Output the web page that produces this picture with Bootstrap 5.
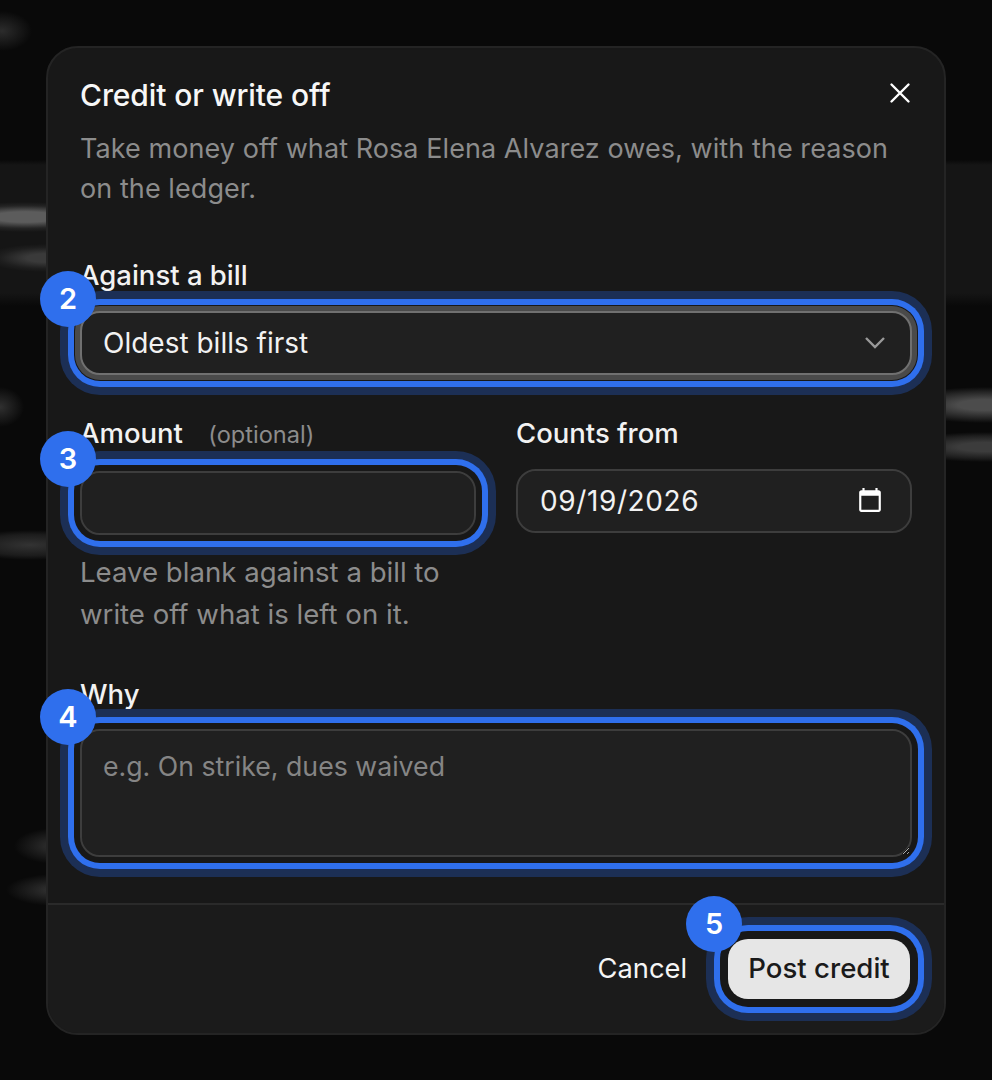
<!doctype html>
<html lang="en">
<head>
<meta charset="utf-8">
<title>Credit or write off</title>
<link href="https://cdn.jsdelivr.net/npm/bootstrap@5.3.0/dist/css/bootstrap.min.css" rel="stylesheet">
<style>
html,body{height:1080px;overflow:hidden}
body{color-scheme:dark;font-family:Inter,"Noto Sans",sans-serif;color:#f2f2f2;padding:46px 46px 45px;
background-color:#090909;background-repeat:no-repeat;
background-image:
 radial-gradient(ellipse 30px 20px at 2px 31px,#2c2c2c,transparent),
 radial-gradient(ellipse 90px 15px at 25px 217px,#5c5c5c 35%,#242424 75%,transparent),
 radial-gradient(ellipse 60px 14px at 45px 258px,#3a3a3a 30%,#1e1e1e 75%,transparent),
 radial-gradient(ellipse 24px 20px at 0 407px,#303030,transparent),
 radial-gradient(ellipse 70px 15px at 30px 545px,#333,#1c1c1c 70%,transparent),
 radial-gradient(ellipse 42px 18px at 56px 846px,#343434,transparent),
 radial-gradient(ellipse 50px 16px at 56px 890px,#363636,transparent),
 radial-gradient(ellipse 90px 18px at 985px 405px,#4c4c4c 30%,#222 75%,transparent),
 radial-gradient(ellipse 90px 15px at 985px 447px,#3c3c3c 30%,#1e1e1e 75%,transparent),
 linear-gradient(#090909,#151515 5px,#151515 133px,#090909);
background-size:auto,auto,auto,auto,auto,auto,auto,auto,auto,100% 146px;
background-position:0 0,0 0,0 0,0 0,0 0,0 0,0 0,0 0,0 0,0 160px}
.sheet{height:989px;width:900px;background:#181818;border:2px solid #242424;border-radius:32px;--bs-card-bg:#181818}
.sheet-main{padding:29px 32px 0}
.sheet-title{font-size:30px;line-height:36px;font-weight:500;letter-spacing:-.1px;color:#f7f7f7}
.closer{width:24px;height:24px;line-height:0;background:none;border:0;padding:0;color:#fff;margin-top:-4px}
.sheet-desc{font-size:27px;letter-spacing:.07px;line-height:40px;color:#8c8c8c;margin-top:16px;margin-bottom:46px}
.fld-label{font-size:27.5px;line-height:40px;font-weight:500;color:#f2f2f2;margin-bottom:16px;display:block}
.opt{font-size:23.6px;font-weight:400;color:#8c8c8c;margin-left:18px}
.spot{position:relative}
.fld{font-size:28px;line-height:40px;height:64px;padding:10px 21px;color:#f2f2f2;background-color:#202020;border:2px solid #3d3d3d;border-radius:20px}
.fld:focus{background-color:#202020;color:#f2f2f2;border-color:#3d3d3d}
.fld::placeholder{color:#858585}
input[type=date].fld{letter-spacing:.6px;padding-left:22px;padding-right:24px}
select.fld{background-size:22px 14px;background-position:right 24px center;background-image:url("data:image/svg+xml,%3csvg xmlns='http://www.w3.org/2000/svg' viewBox='0 0 22 14'%3e%3cpath fill='none' stroke='%23999' stroke-width='2.4' d='M2 2l9 9 9-9'/%3e%3c/svg%3e");border-color:#707070;box-shadow:0 0 0 5px #4a4a4a,0 0 0 6px #181818,0 0 0 12px #2f6fed,0 0 0 20px #1c2f55}
.ringed,.ringed:focus{box-shadow:0 0 0 6px #181818,0 0 0 12px #2f6fed,0 0 0 20px #1c2f55}
textarea.fld{height:128px;border-radius:20px;font-size:26.7px;padding-top:15px}
.pin{position:absolute;left:-40px;top:-40px;width:56px;height:56px;border-radius:50%;background:#2f6fed;color:#fff;font-size:29px;font-weight:600;z-index:2}
.pair{--bs-gutter-x:40px;margin-top:38px}
.hintline{font-size:27.6px;line-height:42px;color:#8c8c8c;margin-top:16px}
.why{margin-top:39px}
.why .fld-label{margin-bottom:15px}
.sheet-foot{margin-top:auto;height:130px;background:#1b1b1b;border-top:2px solid #2a2a2a;border-radius:0 0 30px 30px;padding-right:34px}
.cancel{font-size:27.3px;color:#f5f5f5;background:none;border:0;padding:0;margin-right:41px}
.post{position:relative;width:182px;height:60px;font-size:27.6px;font-weight:450;background:#e6e6e6;color:#1a1a1a;border:0;border-radius:20px;padding:0;box-shadow:0 0 0 8px #181818,0 0 0 14px #2f6fed,0 0 0 22px #1c2f55}
.post:hover,.post:active{background:#e6e6e6!important;color:#1a1a1a!important}
.post .pin{left:-42px;top:-43px}
</style>
</head>
<body>
<div class="card sheet d-flex flex-column">
  <div class="sheet-main">
    <div class="d-flex justify-content-between align-items-center">
      <div class="sheet-title">Credit or write off</div>
      <button class="closer" type="button" aria-label="Close"><svg width="24" height="24" viewBox="0 0 24 24"><path d="M3.5 3.5l17 17M20.5 3.5l-17 17" fill="none" stroke="currentColor" stroke-width="2.4" stroke-linecap="round"/></svg></button>
    </div>
    <p class="sheet-desc">Take money off what Rosa Elena Alvarez owes, with the reason on the ledger.</p>

    <label class="fld-label">Against a bill</label>
    <div class="spot">
      <span class="pin d-flex align-items-center justify-content-center">2</span>
      <select class="form-select fld"><option>Oldest bills first</option></select>
    </div>

    <div class="row pair">
      <div class="col-6">
        <label class="fld-label">Amount <span class="opt">(optional)</span></label>
        <div class="spot">
          <span class="pin d-flex align-items-center justify-content-center">3</span>
          <input class="form-control fld ringed" type="text">
        </div>
        <div class="hintline">Leave blank against a bill to write off what is left on it.</div>
      </div>
      <div class="col-6">
        <label class="fld-label">Counts from</label>
        <input class="form-control fld" type="date" value="2026-09-19">
      </div>
    </div>

    <div class="why">
      <label class="fld-label">Why</label>
      <div class="spot">
        <span class="pin d-flex align-items-center justify-content-center">4</span>
        <textarea class="form-control fld ringed" placeholder="e.g. On strike, dues waived"></textarea>
      </div>
    </div>
  </div>
  <div class="sheet-foot d-flex align-items-center justify-content-end">
    <button class="btn cancel" type="button">Cancel</button>
    <button class="btn post" type="button"><span class="pin d-flex align-items-center justify-content-center">5</span>Post credit</button>
  </div>
</div>
<script src="https://cdn.jsdelivr.net/npm/bootstrap@5.3.0/dist/js/bootstrap.bundle.min.js"></script>
</body>
</html>
